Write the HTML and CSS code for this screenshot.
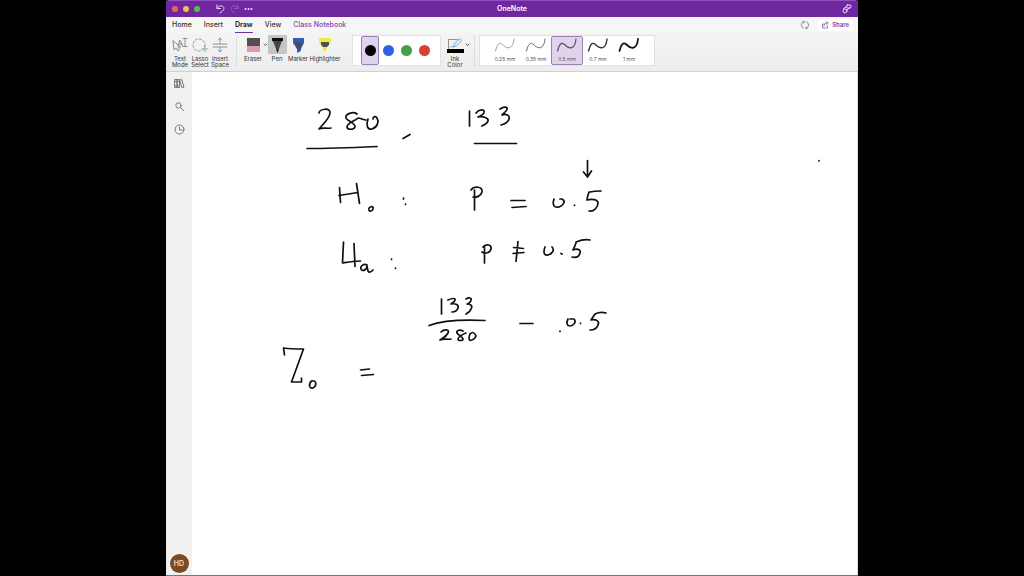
FILE: index.html
```html
<!DOCTYPE html>
<html lang="en">
<head>
<meta charset="utf-8">
<meta name="viewport" content="width=device-width, initial-scale=1">
<title>OneNote</title>
<link rel="stylesheet" href="styles.css">
</head>
<body>
<div class="window">
  <header class="titlebar">
    <div class="titlebar-side">
      <div class="lights"><i class="light close"></i><i class="light minimize"></i><i class="light expand"></i></div>
      <button class="title-button" aria-label="Undo"><svg width="9" height="10" viewBox="0 0 9 10"><path d="M1 1v3.500h3.500M1 4.500C2.500 2 5 1 7 2.500s1 4-3 6.500"/></svg></button>
      <button class="title-button faded" aria-label="Redo"><svg width="9" height="10" viewBox="0 0 9 10"><path d="M8 1v3.500H4.500M8 4.500C6.500 2 4 1 2 2.500s-1 4 3 6.500"/></svg></button>
      <button class="title-button" aria-label="More"><svg width="9" height="10" viewBox="0 0 9 10"><path class="dots" d="M1.500 5h.1M4.500 5h.1M7.500 5h.1"/></svg></button>
    </div>
    <h1 class="title">OneNote</h1>
    <div class="titlebar-side end">
      <button class="title-button" aria-label="Ribbon options"><svg width="10" height="10" viewBox="0 0 10 10"><rect x="4.500" y="1" width="4.500" height="3" rx="1"/><circle cx="3" cy="7" r="2"/><path d="M1.500 4.500 4 3M4.500 6l3-2"/></svg></button>
    </div>
  </header>

  <nav class="tabs">
    <a class="tab" href="#home">Home</a>
    <a class="tab" href="#insert">Insert</a>
    <a class="tab active" href="#draw">Draw</a>
    <a class="tab" href="#view">View</a>
    <a class="tab accent" href="#class">Class Notebook</a>
    <div class="tab-actions">
      <button class="sync" aria-label="Sync"><svg width="10" height="10" viewBox="0 0 10 10"><path d="M3.500 8.200A3.500 3.500 0 0 1 4 1.600M6.500 1.800A3.500 3.500 0 0 1 6 8.400M3 1.300l1.300.3-.5 1.300M7 8.700l-1.300-.3.500-1.300"/></svg></button>
      <button class="share"><svg width="7" height="8" viewBox="0 0 7 8"><path d="M2.500 3H.5v4h5V5M2 5c0-2 1-3 3-3M4 .5 6.300 2 4.300 4"/></svg>Share</button>
    </div>
  </nav>

  <div class="ribbon">
    <button class="tool"><span class="icon"><svg width="18" height="18" viewBox="0 0 18 18"><path class="line" d="m2 5 1 9 2-2 2 3 1.500-1L7 11h2.500zM7 10l2-6 2.500 6M8 8h3M12 2.500h4M14 2.500v8M12 10.500h4"/></svg></span>Text<br>Mode</button>
    <button class="tool"><span class="icon"><svg width="18" height="18" viewBox="0 0 18 18"><circle class="line dashed" cx="8" cy="9" r="6"/><path class="green" d="M14 10v6M11 13h6"/></svg></span>Lasso<br>Select</button>
    <button class="tool"><span class="icon"><svg width="18" height="18" viewBox="0 0 18 18"><path class="line" d="M2 8h14M2 11h14"/><path class="steel" d="M9 8V2M7 4l2-2 2 2M9 11v5M7 14l2 2 2-2"/></svg></span>Insert<br>Space</button>
    <span class="separator"></span>
    <button class="tool"><span class="icon"><svg width="14" height="16" viewBox="0 0 14 16"><path fill="#525052" d="M1 1h13v8H1z"/><path fill="#dc9bb1" d="M1 9h13v6H1z"/></svg></span>Eraser</button>
    <button class="chevron" aria-label="Eraser options"><svg width="5" height="19" viewBox="0 0 5 19"><path d="m1 9 1.500 1.500L4 9"/></svg></button>
    <button class="tool pen" aria-pressed="true"><span class="icon selected"><svg width="13" height="16" viewBox="0 0 13 16"><path fill="#111" d="M1 1h11v3H1zM5 12h3l-1.500 4z"/><path fill="#444" d="M2 4h9l-3.500 9h-2z"/></svg></span>Pen</button>
    <button class="tool marker"><span class="icon"><svg width="13" height="16" viewBox="0 0 13 16"><path fill="#315bc5" d="M1 1h11v5l-3 6v2l-4 2v-4L1 6z"/><path fill="#4b4b55" d="M3 5h7l-2 7H5z"/></svg></span>Marker</button>
    <button class="tool highlighter"><span class="icon"><svg width="14" height="16" viewBox="0 0 14 16"><path fill="#eee94c" d="M1 1h12v4l-2 3H3L1 5z"/><path fill="#515151" d="M3 5h8v3L9 10H5L3 8z"/><path fill="#eee94c" d="M5 10h4v3l-4 2z"/></svg></span>Highlighter</button>

    <div class="panel colors">
      <button class="swatch selected" aria-label="Black"><i class="ink black"></i></button>
      <button class="swatch" aria-label="Blue"><i class="ink blue"></i></button>
      <button class="swatch" aria-label="Green"><i class="ink green-ink"></i></button>
      <button class="swatch" aria-label="Red"><i class="ink red"></i></button>
    </div>
    <button class="tool"><span class="icon"><svg width="18" height="18" viewBox="0 0 18 18"><path class="line" d="M2.500 13V3.500h9"/><path fill="#d5eafa" stroke="#74a8cd" stroke-width=".8" d="m7 11 1.500-4L14 2.500l2 2-5 5zM4 11c2-2 3 1 5-1"/><path fill="#000" d="M1 13h17v4H1z"/></svg></span>Ink<br>Color</button>
    <button class="chevron" aria-label="Ink color options"><svg width="5" height="19" viewBox="0 0 5 19"><path d="m1 9 1.500 1.500L4 9"/></svg></button>
    <span class="separator narrow"></span>

    <div class="panel widths">
      <button class="nib"><svg width="22" height="16" viewBox="0 0 22 16"><path stroke="#888" stroke-width=".8" d="M1.500 14C3 8 5 4 9 8s10 5 11-6"/></svg>0.25 mm</button>
      <button class="nib"><svg width="22" height="16" viewBox="0 0 22 16"><path stroke="#667" stroke-width="1" d="M1.500 14C3 8 5 4 9 8s10 5 11-6"/></svg>0.35 mm</button>
      <button class="nib selected" aria-pressed="true"><svg width="22" height="16" viewBox="0 0 22 16"><path stroke="#5d5068" stroke-width="1.200" d="M1.500 14C3 8 5 4 9 8s10 5 11-6"/></svg>0.5 mm</button>
      <button class="nib"><svg width="22" height="16" viewBox="0 0 22 16"><path stroke="#333" stroke-width="1.400" d="M1.500 14C3 8 5 4 9 8s10 5 11-6"/></svg>0.7 mm</button>
      <button class="nib"><svg width="22" height="16" viewBox="0 0 22 16"><path stroke="#111" stroke-width="1.800" d="M1.500 14C3 8 5 4 9 8s10 5 11-6"/></svg>1 mm</button>
    </div>
  </div>

  <div class="workspace">
    <aside class="sidebar">
      <button class="side-button" aria-label="Notebooks"><svg width="11" height="11" viewBox="0 0 11 11"><path d="M1 1.500h2v8H1zM3.500 1.500h2v8h-2zM6 2l1.700-.5 2.300 7.700-1.700.5zM1 3.500h4.500M1 8h4.500"/></svg></button>
      <button class="side-button" aria-label="Search"><svg width="11" height="11" viewBox="0 0 11 11"><circle cx="4.500" cy="4.500" r="2.700"/><path d="m6.500 6.500 3.300 3.300"/></svg></button>
      <button class="side-button" aria-label="Recent"><svg width="11" height="11" viewBox="0 0 11 11"><circle cx="5.500" cy="5.500" r="4.500"/><path d="M5.500 3v3H8"/></svg></button>
      <button class="avatar" aria-label="Account HD">HD</button>
    </aside>
    <main class="page">
      <svg class="handwriting" viewBox="192 72 665 503" preserveAspectRatio="xMinYMin meet" role="img" aria-label="Handwritten notes on a hypothesis test for a proportion">
        <path d="M319 113c0-4 12-6 11 0 0 5-7 11-11 16 4-2 7 0 12-1"/>
        <path d="M357 114c-4-3-12 0-11 4 1 3 10 5 9 9-1 3-8 3-8 0 0-4 8-6 11-9 3 0 5 2 8 2M368 119c-2 6-1 11 4 10 6-2 7-8 5-11-1-2-4-2-4 1"/>
        <path d="M307 148.500c23 0 47-1 70-2M403 138.500l7-4"/>
        <path d="M469.500 111v15M476 113c3-4 9-4 8-1 0 3-4 4-6 5 5-1 11 1 10 4s-4 4-6 5M500 109c4-3 8-2 7 0 0 3-4 4-5 6 5-2 8 1 7 4-1 4-4 5-8 6"/>
        <path d="M474.500 143.500h42"/>
        <path d="M339.500 187.500l1 15M339 195.500l19-3M356.500 183.500l3 20M369 208c-1 4 3 4 4 1s-2-3-4-1M403.500 198v1M405.500 204v.5"/>
        <path d="M471 190c3-4 12-4 11 2-1 4-6 6-9 5M474.500 190v20M511 200.500h14M512 207.500l14-1"/>
        <path d="M554 199c-2 6 0 9 5 8 5-2 7-6 3-8h-2M574.500 205v.5M589 192c-1 3-2 6-2 8 4-1 11-1 11 3s-4 9-9 8M590 192c4-1 7-1 11-1"/>
        <path d="M587.500 160.500v15M583.500 172l4 5 4-6"/>
        <path d="M343.500 242l-1 21c6-1 11-2 18-2M354 243.500l1 23M367 265c-3-2-7 1-6 4s6 1 6-3l1 5c1 2 3 1 5-1M391.500 259v.5M395.500 268v.5"/>
        <path d="M483 247c3-4 9-2 8 2s-6 5-9 3M484.500 246v17M513.500 247.500l10 1M513 253.500l11-1M518 241.500l-2 20"/>
        <path d="M545 247c-2 5-1 9 3 8s7-5 4-8M561 253.500l1 .5M576 243c-1 3-2 5-3 7 5-2 8 0 7 3-1 4-4 5-8 4M576 242c5-2 9-3 14-2"/>
        <path d="M441.500 299v15M448 300c4-2 8-2 7 0 0 2-3 3-4 4 5-1 8 1 7 4-1 3-4 4-6 4M466 299c3-2 6-1 5 1 0 2-3 4-4 4 4 0 6 2 4 5-1 3-3 4-5 5"/>
        <path d="M429 325.500c16-6 36-6 56-5"/>
        <path d="M441 332c3-3 9-3 7 1s-5 5-8 7c4-2 7 0 11-1M463 331c-4-2-7 0-6 2s6 4 6 6-5 2-5 0 5-5 8-6M470 334c-2 5-1 7 2 6s5-4 3-6-3-2-5 0"/>
        <path d="M520 323.500h13M560 331v.5M568 319c-2 4-1 7 2 7s7-4 4-7h-4M580.500 323v.5M595 314l-4 6c5-1 9 1 7 5-1 3-4 5-8 5M595 314c4-2 7-2 11-1"/>
        <path d="M284.500 355l-1-7c7 1 13 1 20 1l-12 33h10v-4M311 382c-3 3-1 7 2 6s4-6 1-7-4 1-4 3M360.500 370l9-1M361.500 375.500l12-1M819 160.500v.5"/>
      </svg>
    </main>
  </div>
</div>
</body>
</html>
```
FILE: styles.css
```css
* {
  box-sizing: border-box;
}

body {
  margin: 0;
  height: 100vh;
  padding: 0 166px;
  background: #000;
  color: #333;
  font: 6px/6px Inter, "Liberation Sans", sans-serif;
}

button {
  border: 0;
  padding: 0;
  margin: 0;
  background: none;
  color: inherit;
  font: inherit;
}

svg {
  display: block;
  fill: none;
  stroke-linecap: round;
  stroke-linejoin: round;
}

.window {
  display: flex;
  flex-direction: column;
  min-width: 500px;
  height: 100%;
  background: #f1f0f1;
  border-bottom: 1px solid #777;
  border-radius: 4px 4px 0 0;
  overflow: hidden;
}

.titlebar {
  display: flex;
  flex: none;
  align-items: center;
  height: 17px;
  padding: 0 6px;
  background: #6f27a1;
  border-top: 1px solid #9250bd;
  color: #fff;
}

.titlebar-side {
  display: flex;
  flex: 1;
  align-items: center;
  gap: 5px;
}

.end {
  justify-content: flex-end;
}

.lights {
  display: flex;
  gap: 5px;
  margin-right: 11px;
}

.light {
  width: 6px;
  height: 6px;
  border-radius: 50%;
}

.close { background: #ee6259; }
.minimize { background: #f3bd4e; }
.expand { background: #59bf4c; }

.title-button {
  stroke: #e9d9f2;
}

.title-button .dots {
  stroke-width: 2;
}

.faded {
  opacity: 0.3;
}

.title {
  margin: 0;
  font-size: 7px;
  line-height: 10px;
  font-weight: 600;
}

.tabs {
  display: flex;
  flex: none;
  align-items: center;
  gap: 12px;
  height: 16px;
  padding: 0 5px 0 6px;
  background: #f7f6f7;
  font-size: 7px;
  line-height: 14px;
}

.tab {
  height: 15px;
  border-bottom: 1px solid transparent;
  color: #333;
  text-decoration: none;
  font-weight: 500;
}

.active {
  border-color: #7131a2;
  font-weight: 700;
}

.accent {
  color: #8448b0;
}

.tab-actions {
  display: flex;
  align-items: center;
  gap: 8px;
  margin-left: auto;
}

.sync {
  stroke: #777;
  stroke-width: 0.8;
}

.share {
  display: flex;
  align-items: center;
  gap: 3px;
  height: 12px;
  padding: 0 4px;
  background: #fff;
  border-radius: 2px;
  color: #7840a5;
  stroke: #7840a5;
  stroke-width: 0.7;
  font-size: 6px;
  font-weight: 600;
}

.ribbon {
  display: flex;
  flex: none;
  align-items: flex-start;
  height: 39px;
  padding: 2px 4px 0;
  background: linear-gradient(#f5f4f5, #eeedee);
  border-bottom: 1px solid #d2d1d2;
}

.tool {
  display: flex;
  flex: none;
  flex-direction: column;
  align-items: center;
  width: 20px;
}

.icon {
  display: grid;
  place-items: center;
  width: 19px;
  height: 19px;
  margin-bottom: 2px;
}

.icon.selected {
  background: #c6c5c6;
  border-radius: 1px;
}

.pen { width: 18px; }
.marker { width: 24px; }
.highlighter { width: 30px; }

.line {
  stroke: #777;
  stroke-width: 0.8;
}

.dashed {
  stroke-dasharray: 2 2;
}

.green {
  stroke: #87b99b;
}

.steel {
  stroke: #7fa3b6;
}

.chevron {
  flex: none;
  width: 5px;
  stroke: #555;
}

.separator {
  flex: none;
  width: 1px;
  height: 32px;
  margin: 0 6px;
  background: #dfdedf;
}

.narrow {
  margin: 0 4px;
}

.panel {
  display: flex;
  flex: none;
  align-items: stretch;
  height: 31px;
  background: #fff;
  border: 1px solid #e3e2e3;
}

.colors {
  margin: 0 4px 0 12px;
  padding: 0 7px 0 8px;
}

.swatch {
  display: grid;
  place-items: center;
  width: 18px;
  border: 1px solid transparent;
  border-radius: 2px;
}

.swatch.selected,
.nib.selected {
  background: #e1d3ed;
  border-color: #9a80b2;
}

.ink {
  width: 11px;
  height: 11px;
  border-radius: 50%;
}

.black { background: #000; }
.blue { background: #2e62e6; }
.green-ink { background: #43a047; }
.red { background: #d8412f; }

.widths {
  padding: 0 9px;
}

.nib {
  display: flex;
  flex-direction: column;
  align-items: center;
  justify-content: space-between;
  width: 32px;
  padding: 0 0 2px;
  border: 1px solid transparent;
  border-radius: 2px;
  font-size: 5px;
  color: #555;
}

.nib + .nib {
  margin-left: -1px;
}

.workspace {
  display: flex;
  flex: 1;
  min-height: 0;
}

.sidebar {
  display: flex;
  flex: none;
  flex-direction: column;
  align-items: center;
  gap: 12px;
  width: 26px;
  padding: 6px 0 2px;
  background: #f2f1f2;
}

.side-button {
  stroke: #777;
}

.avatar {
  width: 19px;
  height: 19px;
  margin-top: auto;
  border-radius: 50%;
  background: #7c4a22;
  color: #eadccf;
  font-size: 7px;
  font-weight: 600;
}

.page {
  flex: 1;
  min-width: 0;
  background: #fff;
  border-right: 1px solid #ddd;
}

.handwriting {
  width: 100%;
  height: 100%;
  stroke: #111;
  stroke-width: 1.7;
}
```
